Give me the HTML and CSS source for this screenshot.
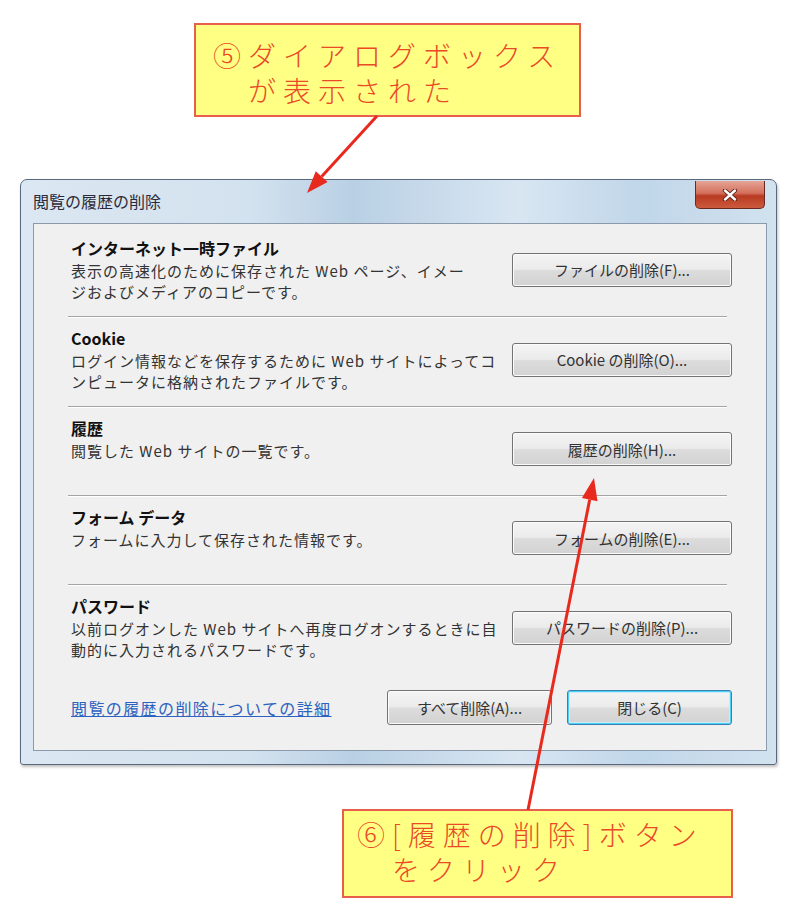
FILE: index.html
```html
<!DOCTYPE html>
<html lang="ja">

<head>
  <meta charset="UTF-8">
  <meta name="viewport" content="width=device-width, initial-scale=1.0">
  <title>閲覧の履歴の削除</title>
  <link rel="stylesheet" href="styles.css">
</head>

<body>
  <div class="page">
    <div class="callout callout-top">
      ⑤ダイアログボックス<br><span class="indent">が表示された</span>
    </div>

    <div class="dialog">
      <div class="titlebar">
        <div class="title">閲覧の履歴の削除</div>
        <div class="close-btn">
          <svg width="16" height="12" viewBox="0 0 16 12">
            <path d="M3 1.5 L13 10.5 M13 1.5 L3 10.5" stroke="#5a1c14" stroke-width="4.2" stroke-linecap="round" />
            <path d="M3 1.5 L13 10.5 M13 1.5 L3 10.5" stroke="#ffffff" stroke-width="2.4" stroke-linecap="round" />
          </svg>
        </div>
      </div>

      <div class="panel">
        <div class="section">
          <div class="info">
            <div class="heading">インターネット一時ファイル</div>
            <div class="desc">表示の高速化のために保存された Web ページ、イメー<br>ジおよびメディアのコピーです。</div>
          </div>
          <button class="btn">ファイルの削除(F)...</button>
        </div>
        <div class="sep"></div>

        <div class="section">
          <div class="info">
            <div class="heading">Cookie</div>
            <div class="desc">ログイン情報などを保存するために Web サイトによってコ<br>ンピュータに格納されたファイルです。</div>
          </div>
          <button class="btn">Cookie の削除(O)...</button>
        </div>
        <div class="sep"></div>

        <div class="section">
          <div class="info">
            <div class="heading">履歴</div>
            <div class="desc">閲覧した Web サイトの一覧です。</div>
          </div>
          <button class="btn">履歴の削除(H)...</button>
        </div>
        <div class="sep"></div>

        <div class="section">
          <div class="info">
            <div class="heading">フォーム データ</div>
            <div class="desc">フォームに入力して保存された情報です。</div>
          </div>
          <button class="btn">フォームの削除(E)...</button>
        </div>
        <div class="sep"></div>

        <div class="section">
          <div class="info">
            <div class="heading">パスワード</div>
            <div class="desc">以前ログオンした Web サイトへ再度ログオンするときに自<br>動的に入力されるパスワードです。</div>
          </div>
          <button class="btn">パスワードの削除(P)...</button>
        </div>

        <div class="footer">
          <a class="help-link" href="#">閲覧の履歴の削除についての詳細</a>
          <div class="footer-buttons">
            <button class="btn btn-small">すべて削除(A)...</button>
            <button class="btn btn-small btn-default">閉じる(C)</button>
          </div>
        </div>
      </div>
    </div>

    <div class="callout callout-bottom">
      ⑥[履歴の削除]ボタン<br><span class="indent">をクリック</span>
    </div>

    <!-- arrows drawn over everything -->
    <svg class="arrows" width="800" height="911" viewBox="0 0 800 911">
      <line x1="377" y1="116" x2="321.7" y2="176.6" stroke="#e8291d" stroke-width="3" />
      <polygon points="307,193 327.6,181.9 315.8,171.3" fill="#e8291d" />
      <line x1="528" y1="810" x2="589.7" y2="499.6" stroke="#e8291d" stroke-width="3" />
      <polygon points="594,478 597.5,501.2 581.9,498" fill="#e8291d" />
    </svg>
  </div>
</body>

</html>
```

FILE: styles.css
```css
body {
  margin: 0;
  padding: 0;
  background-color: #ffffff;
  font-family: "Noto Sans CJK JP", "Noto Sans", sans-serif;
}

.page {
  position: relative;
  width: 800px;
  height: 911px;
  overflow: hidden;
}

/* yellow callouts */
.callout {
  box-sizing: border-box;
  background-color: #ffff84;
  border: 2px solid #e8604c;
  color: #ea4a26;
  font-size: 28px;
  font-weight: 300;
  letter-spacing: 7px;
  line-height: 35px;
  white-space: nowrap;
}

.callout-top {
  width: 387px;
  height: 94px;
  margin: 23px 0 0 194px;
  padding: 13px 0 0 17px;
}

.callout-bottom {
  width: 391px;
  height: 89px;
  margin: 44px 0 0 342px;
  padding: 6px 0 0 13px;
}

.indent {
  padding-left: 35px;
}

/* dialog window */
.dialog {
  box-sizing: border-box;
  width: 757px;
  margin: 62px 0 0 20px;
  padding: 0 9px 13px 12px;
  border: 1px solid #59687a;
  border-radius: 7px 7px 3px 3px;
  background: linear-gradient(90deg, #dbe7f2 0%, #d3e2ef 30%, #b9d0e4 44%, #c9dbeb 55%, #d8e6f2 66%, #c0d6e9 82%, #d2e2ef 100%);
  box-shadow: 1px 2px 3px rgba(0, 0, 0, 0.25);
}

.titlebar {
  display: flex;
  justify-content: space-between;
  align-items: flex-start;
  height: 43px;
}

.title {
  padding-top: 9px;
  font-size: 16px;
  color: #2a2a3a;
}

.close-btn {
  box-sizing: border-box;
  display: flex;
  align-items: center;
  justify-content: center;
  width: 70px;
  height: 28px;
  margin-top: 1px;
  margin-right: 2px;
  border: 1px solid #6a2a22;
  border-top: none;
  border-radius: 0 0 5px 5px;
  background: linear-gradient(180deg, #e6a496 0%, #d3705c 45%, #b83a22 55%, #cc5a3c 100%);
}

.panel {
  padding: 4px 34px 25px 37px;
  border: 1px solid #8a9aab;
  background-color: #f0f0f0;
  color: #222222;
}

.section {
  display: flex;
  align-items: center;
  padding: 9px 0 14px;
}

.info {
  flex: 1;
  min-height: 64px;
  white-space: nowrap;
}

.heading {
  margin-bottom: 1px;
  font-size: 16px;
  font-weight: bold;
  line-height: 22px;
  color: #111111;
}

.desc {
  font-size: 15px;
  letter-spacing: 1px;
  line-height: 21px;
  color: #333333;
}

.sep {
  margin: 0 5px 0 -3px;
  border-top: 1px solid #a4a4a4;
  border-bottom: 1px solid #ffffff;
}

.btn {
  box-sizing: border-box;
  width: 220px;
  height: 34px;
  padding: 0;
  border: 1px solid #737373;
  border-radius: 3px;
  background: linear-gradient(180deg, #f4f4f4 0%, #ebebeb 48%, #dcdcdc 52%, #d2d2d2 100%);
  box-shadow: inset 0 0 0 1px #fbfbfb;
  font-family: "Noto Sans CJK JP", "Noto Sans", sans-serif;
  font-size: 15px;
  color: #333333;
}

.footer {
  display: flex;
  align-items: center;
  margin-top: 16px;
}

.help-link {
  font-size: 16px;
  letter-spacing: 1.4px;
  color: #2d62c0;
  text-decoration: underline;
}

.footer-buttons {
  display: flex;
  gap: 15px;
  margin-left: auto;
}

.btn-small {
  width: 165px;
  height: 35px;
}

.btn-default {
  border-color: #3c7fb1;
  box-shadow: inset 0 0 0 1px #48d0f6, inset 0 0 0 2px #c8ecfa;
}

.arrows {
  position: absolute;
  top: 0;
  left: 0;
  pointer-events: none;
}
```
